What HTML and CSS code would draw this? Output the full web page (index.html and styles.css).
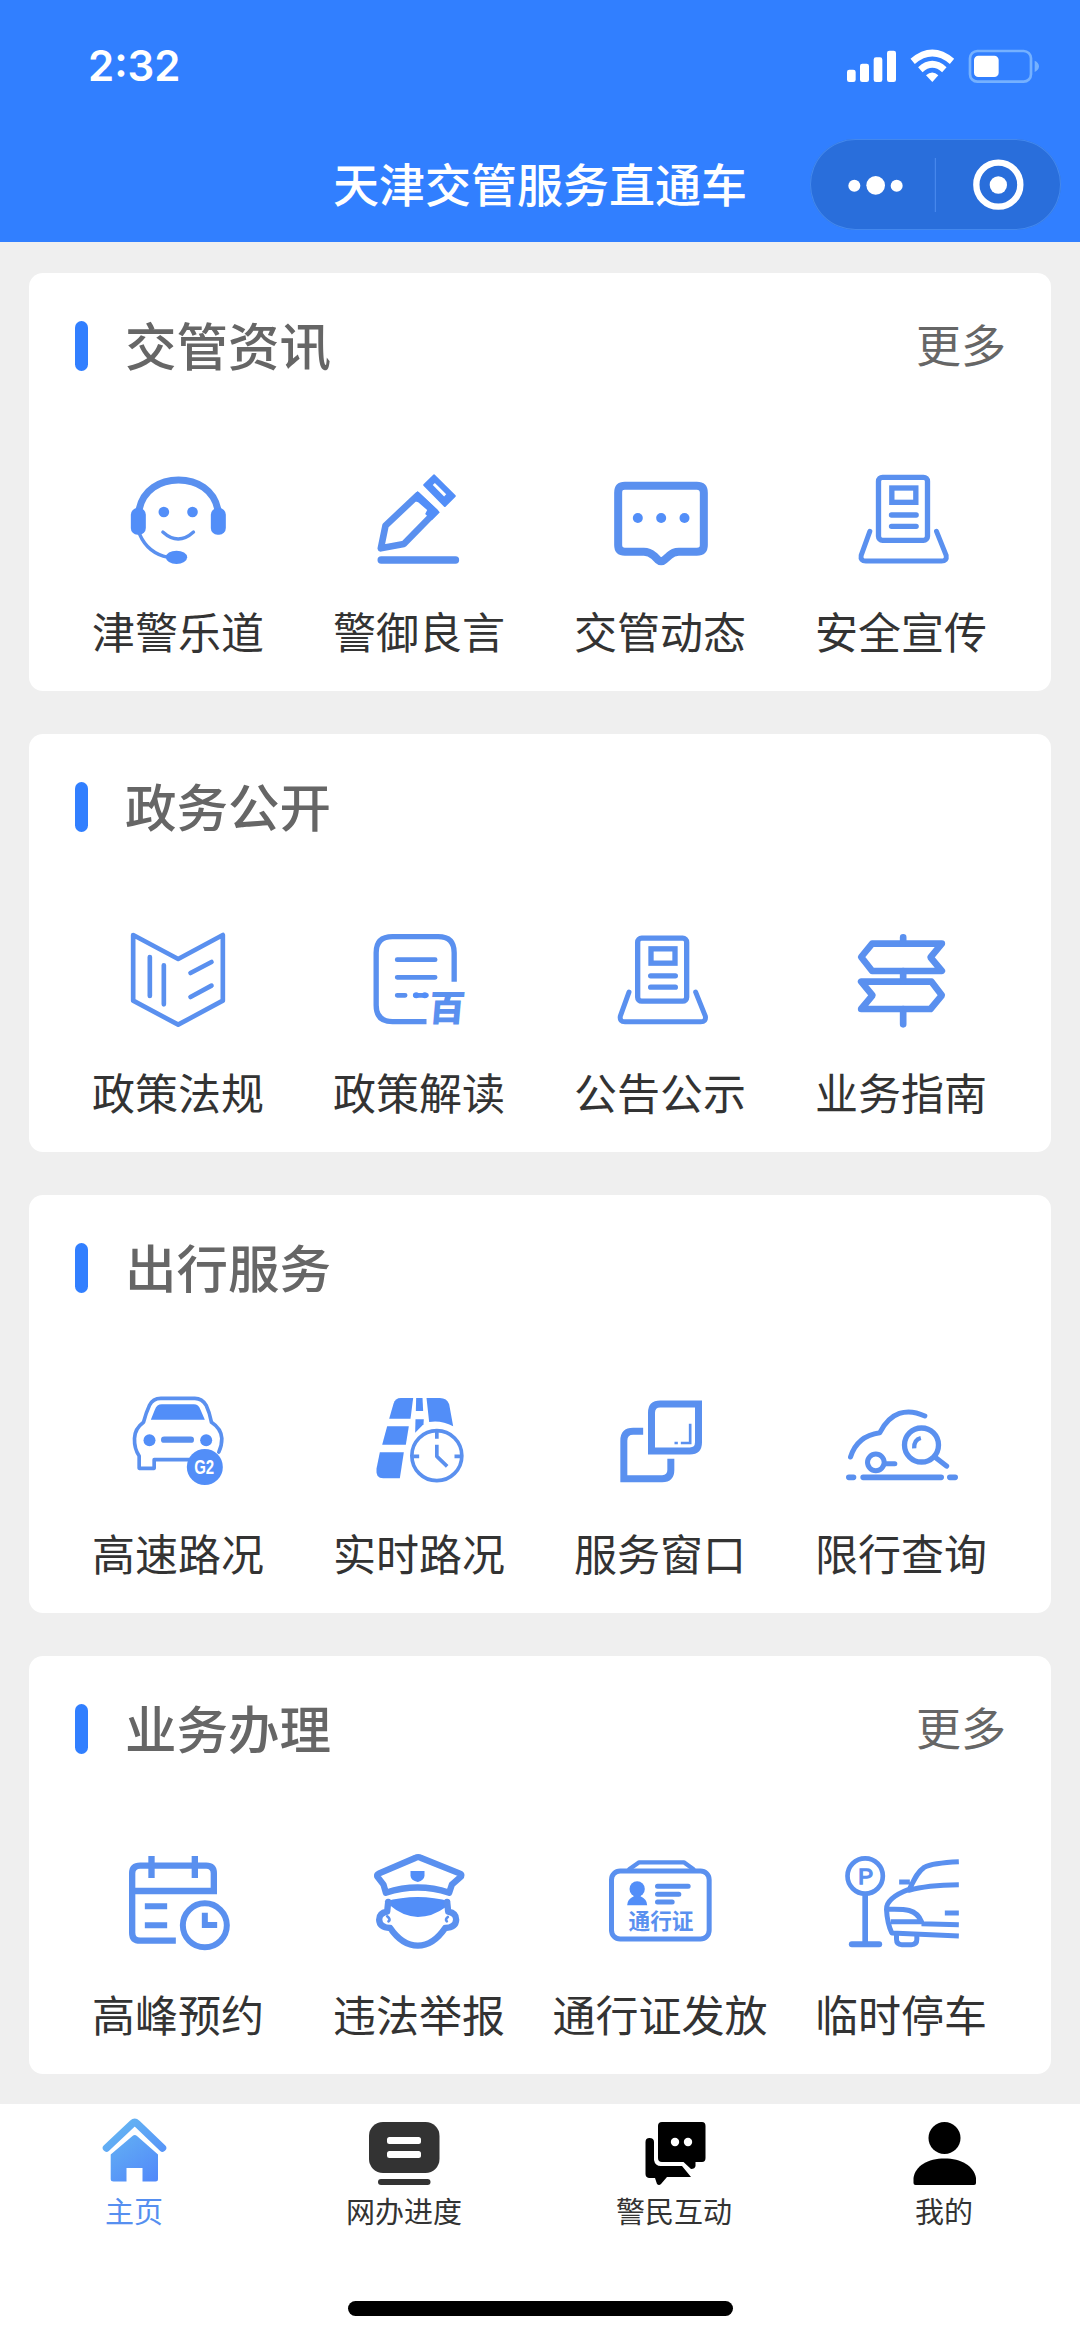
FILE: index.html
```html
<!DOCTYPE html>
<html lang="zh-CN">
<head>
<meta charset="utf-8">
<title>天津交管服务直通车</title>
<link rel="stylesheet" href="styles.css">
</head>
<body>
<div class="app">
  <header class="header">
    <div class="status">
      <span class="time">2:32</span>
      <svg class="status-icons" viewBox="120 45 615 120">
        <g fill="#fff">
          <rect x="141" y="119" width="26" height="37" rx="7"/>
          <rect x="180" y="101" width="27" height="55" rx="7"/>
          <rect x="221" y="82" width="26" height="74" rx="7"/>
          <rect x="261" y="62" width="27" height="94" rx="7"/>
          <path d="M397 156 L378 136 Q397 119 415 136 Z"/>
        </g>
        <g fill="none" stroke="#fff" stroke-width="20">
          <path d="M338 94 Q397 44 456 94"/>
          <path d="M361 119 Q397 87 433 119"/>
        </g>
        <rect x="510" y="63" width="183" height="92" rx="22" fill="none" stroke="#75b1ff" stroke-width="8"/>
        <rect x="522" y="77" width="74" height="64" rx="13" fill="#fff"/>
        <path d="M704 92 Q717 98 717 109 Q717 120 704 126 Z" fill="#75b1ff"/>
      </svg>
    </div>
    <div class="navbar">
      <h1 class="nav-title">天津交管服务直通车</h1>
      <div class="capsule">
        <svg class="capsule-icons" viewBox="30 325 753 273">
          <g fill="#fff">
            <circle cx="163" cy="465" r="18"/><circle cx="227" cy="464" r="28"/><circle cx="290" cy="465" r="18"/>
            <circle cx="595" cy="463" r="26"/>
          </g>
          <circle cx="595" cy="462" r="66" fill="none" stroke="#fff" stroke-width="19"/>
          <path d="M406 382V544" stroke="#4c8df0" stroke-width="3"/>
        </svg>
      </div>
    </div>
  </header>

  <main class="content">
    <section class="card">
      <div class="card-head"><i class="bar"></i><h2>交管资讯</h2><a class="more">更多</a></div>
      <div class="grid">
        <div class="item">
          <svg class="icon" viewBox="117.5 60 360 360">
            <path d="M178 208C190 150 240 120 296 120S402 150 414 208" class="s" stroke-width="21"/>
            <rect x="153" y="204" width="45" height="80" rx="20" class="f"/>
            <rect x="393" y="204" width="45" height="80" rx="20" class="f"/>
            <circle cx="252" cy="216" r="16" class="f"/><circle cx="338" cy="216" r="16" class="f"/>
            <path d="M249 276Q295 318 341 276" class="s" stroke-width="10"/>
            <path d="M179 282Q204 340 265 352" class="s" stroke-width="10"/>
            <ellipse cx="290" cy="352" rx="32" ry="20" class="f"/>
          </svg>
          <span>津警乐道</span>
        </div>
        <div class="item">
          <svg class="icon" viewBox="840.5 60 360 360">
            <path d="M1013 166L1066 216L972 312L903 325L917 257Z" class="s" stroke-width="20"/>
            <path d="M1013 153L1080 217L1056 241L1036 222L1042 210L1015 187L1000 182Z" class="f"/>
            <path d="M1063 106L1125 168L1095 198L1033 135Z" class="f round"/>
            <path d="M1062 132L1096 166" fill="none" stroke="#fff" stroke-width="9"/>
            <path d="M904 360H1127" class="s" stroke-width="22"/>
          </svg>
          <span>警御良言</span>
        </div>
        <div class="item">
          <svg class="icon" viewBox="123.5 60 360 360">
            <path d="M195 137H411Q432 137 432 158V315Q432 335 411 335H357Q340 335 328 347L314 359Q304 368 294 359L282 347Q268 335 252 335H195Q175 335 175 315V158Q175 137 195 137Z" class="s" stroke-width="24"/>
            <circle cx="234" cy="234" r="15" class="f"/><circle cx="304" cy="234" r="15" class="f"/><circle cx="374" cy="234" r="15" class="f"/>
          </svg>
          <span>交管动态</span>
        </div>
        <div class="item">
          <svg class="icon" viewBox="846.5 60 360 360">
            <rect x="956" y="112" width="147" height="189" rx="12" class="s" stroke-width="16"/>
            <rect x="996" y="144" width="72" height="43" class="s miter" stroke-width="16"/>
            <path d="M995 225H1069M995 259H1069" class="s" stroke-width="16"/>
            <path d="M930 274L904 346Q901 363 918 363H1145Q1162 363 1159 346L1130 274" class="s" stroke-width="15"/>
          </svg>
          <span>安全宣传</span>
        </div>
      </div>
    </section>

    <section class="card">
      <div class="card-head"><i class="bar"></i><h2>政务公开</h2></div>
      <div class="grid">
        <div class="item">
          <svg class="icon" viewBox="117.5 63 360 360">
            <path d="M160 105L295 177L429 105V302L295 374L160 302Z" class="s" stroke-width="14"/>
            <path d="M210 171V288M252 196V313M332 219L395 186M332 291L395 257" class="s" stroke-width="14"/>
          </svg>
          <span>政策法规</span>
        </div>
        <div class="item">
          <svg class="icon" viewBox="840.5 63 360 360">
            <path d="M1123 245V158Q1123 110 1075 110H938Q889 110 889 158V316Q889 365 938 365H1040" class="s butt" stroke-width="16"/>
            <path d="M952 179H1066M952 232H1066M952 286H976M1006 286H1040" class="s" stroke-width="14"/>
            <circle cx="1009" cy="286" r="9" class="f"/><circle cx="1035" cy="286" r="9" class="f"/>
            <text x="1048" y="364" transform="translate(1102 320) skewX(-5) translate(-1102 -320)" class="t" font-size="108" font-weight="900">百</text>
          </svg>
          <span>政策解读</span>
        </div>
        <div class="item">
          <svg class="icon" viewBox="123.5 63 360 360">
            <g transform="translate(-722.5 2.5)">
            <rect x="956" y="112" width="147" height="189" rx="12" class="s" stroke-width="16"/>
            <rect x="996" y="144" width="72" height="43" class="s miter" stroke-width="16"/>
            <path d="M995 225H1069M995 259H1069" class="s" stroke-width="16"/>
            <path d="M930 274L904 346Q901 363 918 363H1145Q1162 363 1159 346L1130 274" class="s" stroke-width="15"/>
            </g>
          </svg>
          <span>公告公示</span>
        </div>
        <div class="item">
          <svg class="icon" viewBox="846.5 63 360 360">
            <path d="M937 131H1146L1112 172L1146 213H937L904 171Z" class="s" stroke-width="20"/>
            <path d="M904 245H1115L1146 286L1112 327H904L938 286Z" class="s" stroke-width="20"/>
            <path d="M1030 112V131M1030 213V245M1030 327V373" class="s" stroke-width="20"/>
          </svg>
          <span>业务指南</span>
        </div>
      </div>
    </section>

    <section class="card">
      <div class="card-head"><i class="bar"></i><h2>出行服务</h2></div>
      <div class="grid">
        <div class="item">
          <svg class="icon" viewBox="117.5 66 360 360">
            <path d="M213 179L225 149Q231 133 246 133H342Q356 133 362 149L375 179Z" class="f"/>
            <path d="M330 299H223V325H178V288Q163 266 164 235Q165 206 191 187Q199 157 209 136Q219 115 243 115H345Q367 115 379 136Q389 157 395 187Q424 206 426 235Q426 258 417 276" class="s" stroke-width="11"/>
            <circle cx="209" cy="241" r="18" class="f"/><circle cx="379" cy="241" r="18" class="f"/>
            <path d="M253 239H333" class="s" stroke-width="19"/>
            <circle cx="375" cy="321" r="54" class="f"/>
            <text x="343" y="342" textLength="60" lengthAdjust="spacingAndGlyphs" class="latin" font-size="58" font-weight="700" fill="#fff">G2</text>
          </svg>
          <span>高速路况</span>
        </div>
        <div class="item">
          <svg class="icon" viewBox="840.5 66 360 360">
            <g class="f">
              <path d="M1000 114H963Q946 114 941 131L928 176H992Z"/>
              <path d="M1009 114H1028L1030 153H1008Z"/>
              <path d="M1040 114H1080Q1101 114 1108 133L1120 199Q1085 180 1048 186Z"/>
              <path d="M922 199H987L978 254H907Z"/>
              <path d="M1007 178H1032L1031 193L1006 218Z"/>
              <path d="M900 277H972L960 355H910Q887 355 890 326Z"/>
            </g>
            <circle cx="1071" cy="287" r="75" class="s" stroke-width="11"/>
            <path d="M1071 215V236M1000 289H1018M1124 289H1142M1071 254V289L1102 319" class="s butt" stroke-width="11"/>
          </svg>
          <span>实时路况</span>
        </div>
        <div class="item">
          <svg class="icon" viewBox="123.5 66 360 360">
            <path d="M275 273V158Q275 132 301 132H416V247Q416 273 390 273Z" class="s miter" stroke-width="21"/>
            <path d="M250 214H220Q192 214 192 242V356H307Q333 356 333 330V296" class="s miter butt" stroke-width="21"/>
            <path d="M391 191V249H363M354 249H344" class="s miter butt" stroke-width="8"/>
          </svg>
          <span>服务窗口</span>
        </div>
        <div class="item">
          <svg class="icon" viewBox="846.5 66 360 360">
            <path d="M872 291C886 245 917 224 960 218C991 157 1040 142 1095 168" class="s" stroke-width="15"/>
            <circle cx="948" cy="307" r="25" class="s" stroke-width="15"/>
            <path d="M975 311H1005" class="s" stroke-width="15"/>
            <circle cx="1085" cy="255" r="51" class="s" stroke-width="16"/>
            <path d="M1125 291L1160 318" class="s" stroke-width="16"/>
            <path d="M1083 234Q1062 239 1063 265" class="s butt" stroke-width="13"/>
            <path d="M867 352H881M910 352H1144M1170 352H1186" class="s" stroke-width="17"/>
          </svg>
          <span>限行查询</span>
        </div>
      </div>
    </section>

    <section class="card">
      <div class="card-head"><i class="bar"></i><h2>业务办理</h2><a class="more">更多</a></div>
      <div class="grid">
        <div class="item">
          <svg class="icon" viewBox="117.5 69 360 360">
            <path d="M288 362H181Q157 362 157 338V160Q157 137 181 137H379Q402 137 402 160V213H157" class="s butt miter" stroke-width="19"/>
            <path d="M215 108V174M345 108V174" class="s butt" stroke-width="19"/>
            <path d="M195 259H262M195 316H262" class="s butt" stroke-width="18"/>
            <circle cx="375" cy="316" r="66" class="s" stroke-width="18"/>
            <path d="M375 278V315H412" class="s butt miter" stroke-width="18"/>
          </svg>
          <span>高峰预约</span>
        </div>
        <div class="item">
          <svg class="icon" viewBox="840.5 69 360 360">
            <path d="M918 218L911 194L892 169Q891 163 898 160L1006 114Q1015 109 1024 114L1139 160Q1147 163 1144 169L1116 194L1108 218Q1014 187 918 218Z" class="s" stroke-width="19"/>
            <path d="M992 153H1034V167Q1033 180 1014 186Q993 181 992 167Z" class="f"/>
            <path d="M914 245Q1014 217 1112 245L1097 262Q1058 291 1014 291Q967 288 933 258Z" class="f"/>
            <path d="M925 246L922 275Q898 279 898 299Q899 323 931 324Q967 377 1014 377Q1060 377 1096 324Q1128 323 1129 299Q1129 279 1105 275L1102 246" class="s" stroke-width="19"/>
            <path d="M922 289Q934 299 926 304M1104 291Q1095 298 1101 304" class="s" stroke-width="8"/>
          </svg>
          <span>违法举报</span>
        </div>
        <div class="item">
          <svg class="icon" viewBox="183.5 69 360 360">
            <rect x="215" y="153" width="293" height="204" rx="26" class="s" stroke-width="15"/>
            <path d="M268 148L298 127H432L461 148" class="s" stroke-width="13"/>
            <circle cx="292" cy="207" r="23" class="f"/>
            <path d="M281 220H304L302 229Q322 238 322 256H262Q262 238 282 229Z" class="f"/>
            <path d="M353 199H445M353 223H417M353 246H397" class="s" stroke-width="15"/>
            <text x="266" y="328" textLength="195" class="t" font-size="65" font-weight="700">通行证</text>
          </svg>
          <span class="wide">通行证发放</span>
        </div>
        <div class="item">
          <svg class="icon" viewBox="906.5 69 360 360">
            <circle cx="976" cy="168" r="53" class="s" stroke-width="14"/>
            <path d="M976 224V370" class="s butt" stroke-width="17"/>
            <path d="M936 373H1018" class="s" stroke-width="18"/>
            <text x="955" y="192" class="latin" font-size="67" fill="#5a90ef" stroke="#5a90ef" stroke-width="4">P</text>
            <path d="M1257 125C1210 127 1175 130 1153 142C1131 157 1122 182 1107 211Q1160 195 1257 194M1107 208C1070 222 1039 241 1040 268Q1042 309 1056 339L1257 348M1042 268C1090 267 1129 264 1145 305H1053M1145 311L1257 314M1078 186H1110M1215 279H1257" class="s butt" stroke-width="15"/>
            <path d="M1070 343V358Q1070 374 1086 374H1115Q1131 374 1131 358V344" class="s" stroke-width="15"/>
          </svg>
          <span>临时停车</span>
        </div>
      </div>
    </section>
  </main>

  <nav class="tabbar">
    <div class="tab active">
      <svg class="tab-icon" viewBox="95 2115 80 70">
        <defs><linearGradient id="home" gradientUnits="userSpaceOnUse" x1="112" y1="2120" x2="156" y2="2180"><stop offset="0" stop-color="#66b8f2"/><stop offset="1" stop-color="#5289fa"/></linearGradient></defs>
        <path d="M106.500 2148L132.500 2123.500Q134.700 2121.500 137 2123.500L162.500 2148" fill="none" stroke="url(#home)" stroke-width="7.500" stroke-linecap="round"/>
        <path d="M132.500 2136Q134.700 2134 137 2136L158 2154.500V2179Q158 2181.500 155.500 2181.500H142.500V2168H126.500V2181.500H113.500Q110.700 2181.500 110.700 2179V2154.500Z" fill="url(#home)"/>
      </svg>
      <span>主页</span>
    </div>
    <div class="tab">
      <svg class="tab-icon" viewBox="365 2115 80 70">
        <rect x="369" y="2122" width="70.500" height="51" rx="14" fill="#333"/>
        <rect x="387" y="2137" width="34" height="7" rx="2.500" fill="#fff"/>
        <rect x="387" y="2151" width="34" height="7" rx="2.500" fill="#fff"/>
        <rect x="378" y="2179" width="52.500" height="6" rx="3" fill="#333"/>
      </svg>
      <span>网办进度</span>
    </div>
    <div class="tab">
      <svg class="tab-icon" viewBox="635 2115 80 70">
        <path d="M662 2122H702Q705.500 2122 705.500 2126V2158Q705.500 2162 702 2162H695.500V2166Q695 2169 691 2169L683.500 2162H662Q658 2162 658 2158V2126Q658 2122 662 2122Z"/>
        <path d="M645.500 2142Q645.500 2138 649.500 2138Q654 2138 654 2142V2160Q655 2166 661 2166H682L691 2177H667L661 2184Q659 2186 657 2184L655 2178H649Q645.500 2177.500 645.500 2174Z"/>
        <circle cx="675" cy="2142" r="4.200" fill="#fff"/><circle cx="688" cy="2142" r="4.200" fill="#fff"/>
      </svg>
      <span>警民互动</span>
    </div>
    <div class="tab">
      <svg class="tab-icon" viewBox="905 2115 80 70">
        <circle cx="944.500" cy="2138" r="16"/>
        <path d="M913.500 2183V2178C915 2166 928 2158.500 944.500 2158.500S974 2166 976 2178V2183Q976 2185 974 2185H915.500Q913.500 2185 913.500 2183Z"/>
      </svg>
      <span>我的</span>
    </div>
  </nav>
  <div class="home-indicator"></div>
</div>
</body>
</html>
```
FILE: styles.css
```css
* { box-sizing: border-box; }

body {
  margin: 0;
  background: #efefef;
  font-family: "Noto Sans CJK SC", "Noto Sans", sans-serif;
  color: #333;
}

.app {
  width: 1080px;
  height: 2339px;
  display: flex;
  flex-direction: column;
  overflow: hidden;
}

.header {
  height: 242px;
  flex: none;
  background: #317fff;
  color: #fff;
  padding-top: 45px;
}

.status {
  height: 40px;
  display: flex;
  align-items: center;
  justify-content: space-between;
  padding: 0 35px 0 88px;
}

.time {
  font: 600 42px/40px Inter, sans-serif;
  padding-top: 1px;
}

.status-icons { width: 205px; height: 40px; }

.navbar {
  margin-top: 53px;
  height: 92px;
  display: grid;
  grid-template-columns: 1fr auto 1fr;
  align-items: center;
}

.nav-title {
  grid-column: 2;
  margin: 0 0 4px;
  font-size: 46px;
  font-weight: 500;
  line-height: 88px;
}

.capsule {
  justify-self: end;
  margin-right: 19px;
  width: 251px;
  height: 91px;
  border-radius: 46px;
  background: #296edb;
  box-shadow: inset 0 0 0 1px #4388ee;
}

.capsule-icons { display: block; width: 251px; height: 91px; }

.content {
  display: flex;
  flex-direction: column;
  gap: 43px;
  padding: 31px 29px 30px;
}

.card {
  height: 418px;
  background: #fff;
  border-radius: 14px;
}

.card-head {
  height: 187px;
  display: flex;
  align-items: flex-start;
  padding: 36px 45px 0 46px;
  line-height: 70px;
}

.bar {
  width: 13px;
  height: 50px;
  margin: 12px 37px 0 0;
  border-radius: 7px;
  background: #317fff;
}

.card-head h2 {
  margin: 0;
  font-size: 51.500px;
  font-weight: 500;
  color: #666;
  line-height: 70px;
}

.more {
  margin-left: auto;
  font-size: 45px;
  color: #666;
}

.grid {
  display: grid;
  grid-template-columns: repeat(4, 241px);
  justify-content: center;
}

.item {
  display: flex;
  flex-direction: column;
  align-items: center;
  font-size: 43px;
  line-height: 60px;
  white-space: nowrap;
}

.item span { margin: 20px 1px 0 0; }

.icon { width: 120px; height: 120px; }

.s {
  fill: none;
  stroke: #5a90ef;
  stroke-linecap: round;
  stroke-linejoin: round;
}

.butt { stroke-linecap: butt; }
.miter { stroke-linejoin: miter; }
.f { fill: #528ef8; }
.round { stroke: #528ef8; stroke-width: 6; stroke-linejoin: round; }
.t { fill: #5a90ef; }
.latin { font-family: "Liberation Sans", sans-serif; }

.tabbar {
  height: 160px;
  flex: none;
  background: #fff;
  display: grid;
  grid-template-columns: repeat(4, 1fr);
  padding-top: 11px;
}

.tab {
  display: flex;
  flex-direction: column;
  align-items: center;
  font-size: 29px;
  line-height: 40px;
}

.tab span { margin: 5px 2px 0 0; }
.tab-icon { width: 80px; height: 70px; }
.active { color: #568ff0; }

.home-indicator {
  flex: 1;
  background: #fff;
  display: flex;
  justify-content: center;
  padding-top: 37px;
}

.home-indicator::before {
  content: "";
  width: 385px;
  height: 15px;
  border-radius: 8px;
  background: #000;
}
```
